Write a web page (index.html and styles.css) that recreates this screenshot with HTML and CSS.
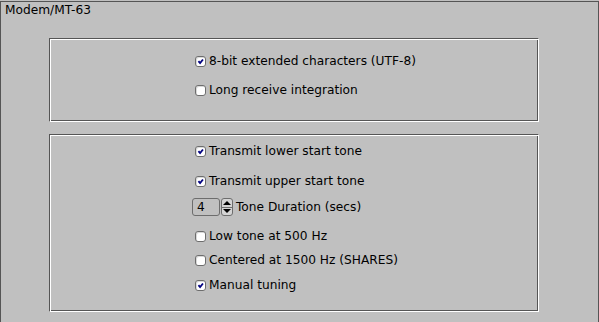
FILE: index.html
```html
<!DOCTYPE html>
<html lang="en">
<head>
    <meta charset="UTF-8">
    <title>Modem/MT-63</title>
    <link rel="stylesheet" href="styles.css">
</head>
<body>

<div class="panel">
    <div class="title">Modem/MT-63</div>

    <div class="group">
        <label class="row">
            <span class="check on"><svg viewBox="0 0 11 11"><path d="M3 5 L5 7.5 L8.5 3" /></svg></span>
            8-bit extended characters (UTF-8)
        </label>
        <label class="row gap5">
            <span class="check"></span>
            Long receive integration
        </label>
    </div>

    <div class="group tx">
        <label class="row">
            <span class="check on"><svg viewBox="0 0 11 11"><path d="M3 5 L5 7.5 L8.5 3" /></svg></span>
            Transmit lower start tone
        </label>
        <label class="row gap6">
            <span class="check on"><svg viewBox="0 0 11 11"><path d="M3 5 L5 7.5 L8.5 3" /></svg></span>
            Transmit upper start tone
        </label>
        <div class="row spin-row gap2">
            <span class="spin-value">4</span>
            <span class="spin-btns">
                <span class="arrow up"></span>
                <span class="arrow down"></span>
            </span>
            <span class="spin-label">Tone Duration (secs)</span>
        </div>
        <label class="row gap5">
            <span class="check"></span>
            Low tone at 500 Hz
        </label>
        <label class="row">
            <span class="check"></span>
            Centered at 1500 Hz (SHARES)
        </label>
        <label class="row gap1">
            <span class="check on"><svg viewBox="0 0 11 11"><path d="M3 5 L5 7.5 L8.5 3" /></svg></span>
            Manual tuning
        </label>
    </div>
</div>

</body>
</html>
```

FILE: styles.css
```css
body {
    margin: 0;
    padding-top: 1px;
    background-color: #c0c0c0;
    font-family: "DejaVu Sans", Verdana, sans-serif;
    font-size: 12.2px;
    color: #000;
    overflow: hidden;
}
.panel {
    height: 340px;
    border: 1px solid #555;
    border-bottom: none;
}
.title {
    padding: 1px 0 0 4px;
    line-height: 15px;
    height: 16px;
}
.group {
    width: 490px;
    height: 84px;
    box-sizing: border-box;
    margin: 19px 0 0 48px;
    padding: 10px 0 0 145px;
    border: 1px solid;
    border-color: #555 #fff #fff #555;
    box-shadow: inset 1px 1px #fff, inset -1px -1px #555;
    display: flex;
    flex-direction: column;
    align-items: flex-start;
}
.group.tx {
    height: 178px;
    margin-top: 12px;
    padding-top: 4px;
}
.row {
    height: 24px;
    display: flex;
    align-items: center;
    line-height: 15px;
    white-space: nowrap;
}
.gap1 { margin-top: 1px; }
.gap2 { margin-top: 2px; }
.gap5 { margin-top: 5px; }
.gap6 { margin-top: 6px; }
.check {
    width: 9px;
    height: 9px;
    margin-right: 3px;
    margin-top: 1px;
    border: 1px solid #6d6d6d;
    border-radius: 3px;
    background-color: #fff;
    box-shadow: inset 1px 1px #d8d8d8;
    flex: none;
}
.check svg {
    display: block;
    width: 9px;
    height: 9px;
}
.check path {
    fill: none;
    stroke: #000080;
    stroke-width: 2.2;
}
.spin-row {
    margin-left: -3px;
}
.spin-value {
    width: 22px;
    height: 16px;
    padding-left: 4px;
    border: 1px solid #6d6d6d;
    border-radius: 3px;
    line-height: 16px;
}
.spin-btns {
    display: flex;
    flex-direction: column;
    margin-left: 1px;
    width: 10px;
    height: 16px;
    border: 1px solid #6d6d6d;
    border-radius: 3px;
    background-color: #d4d4d4;
}
.arrow {
    flex: 1;
    display: flex;
    align-items: center;
    justify-content: center;
}
.arrow::before {
    content: "";
    border-left: 4px solid transparent;
    border-right: 4px solid transparent;
}
.arrow.up {
    border-bottom: 1px solid #6d6d6d;
}
.arrow.up::before {
    border-bottom: 4px solid #000;
}
.arrow.down::before {
    border-top: 4px solid #000;
}
.spin-label {
    margin-left: 3px;
}
```
